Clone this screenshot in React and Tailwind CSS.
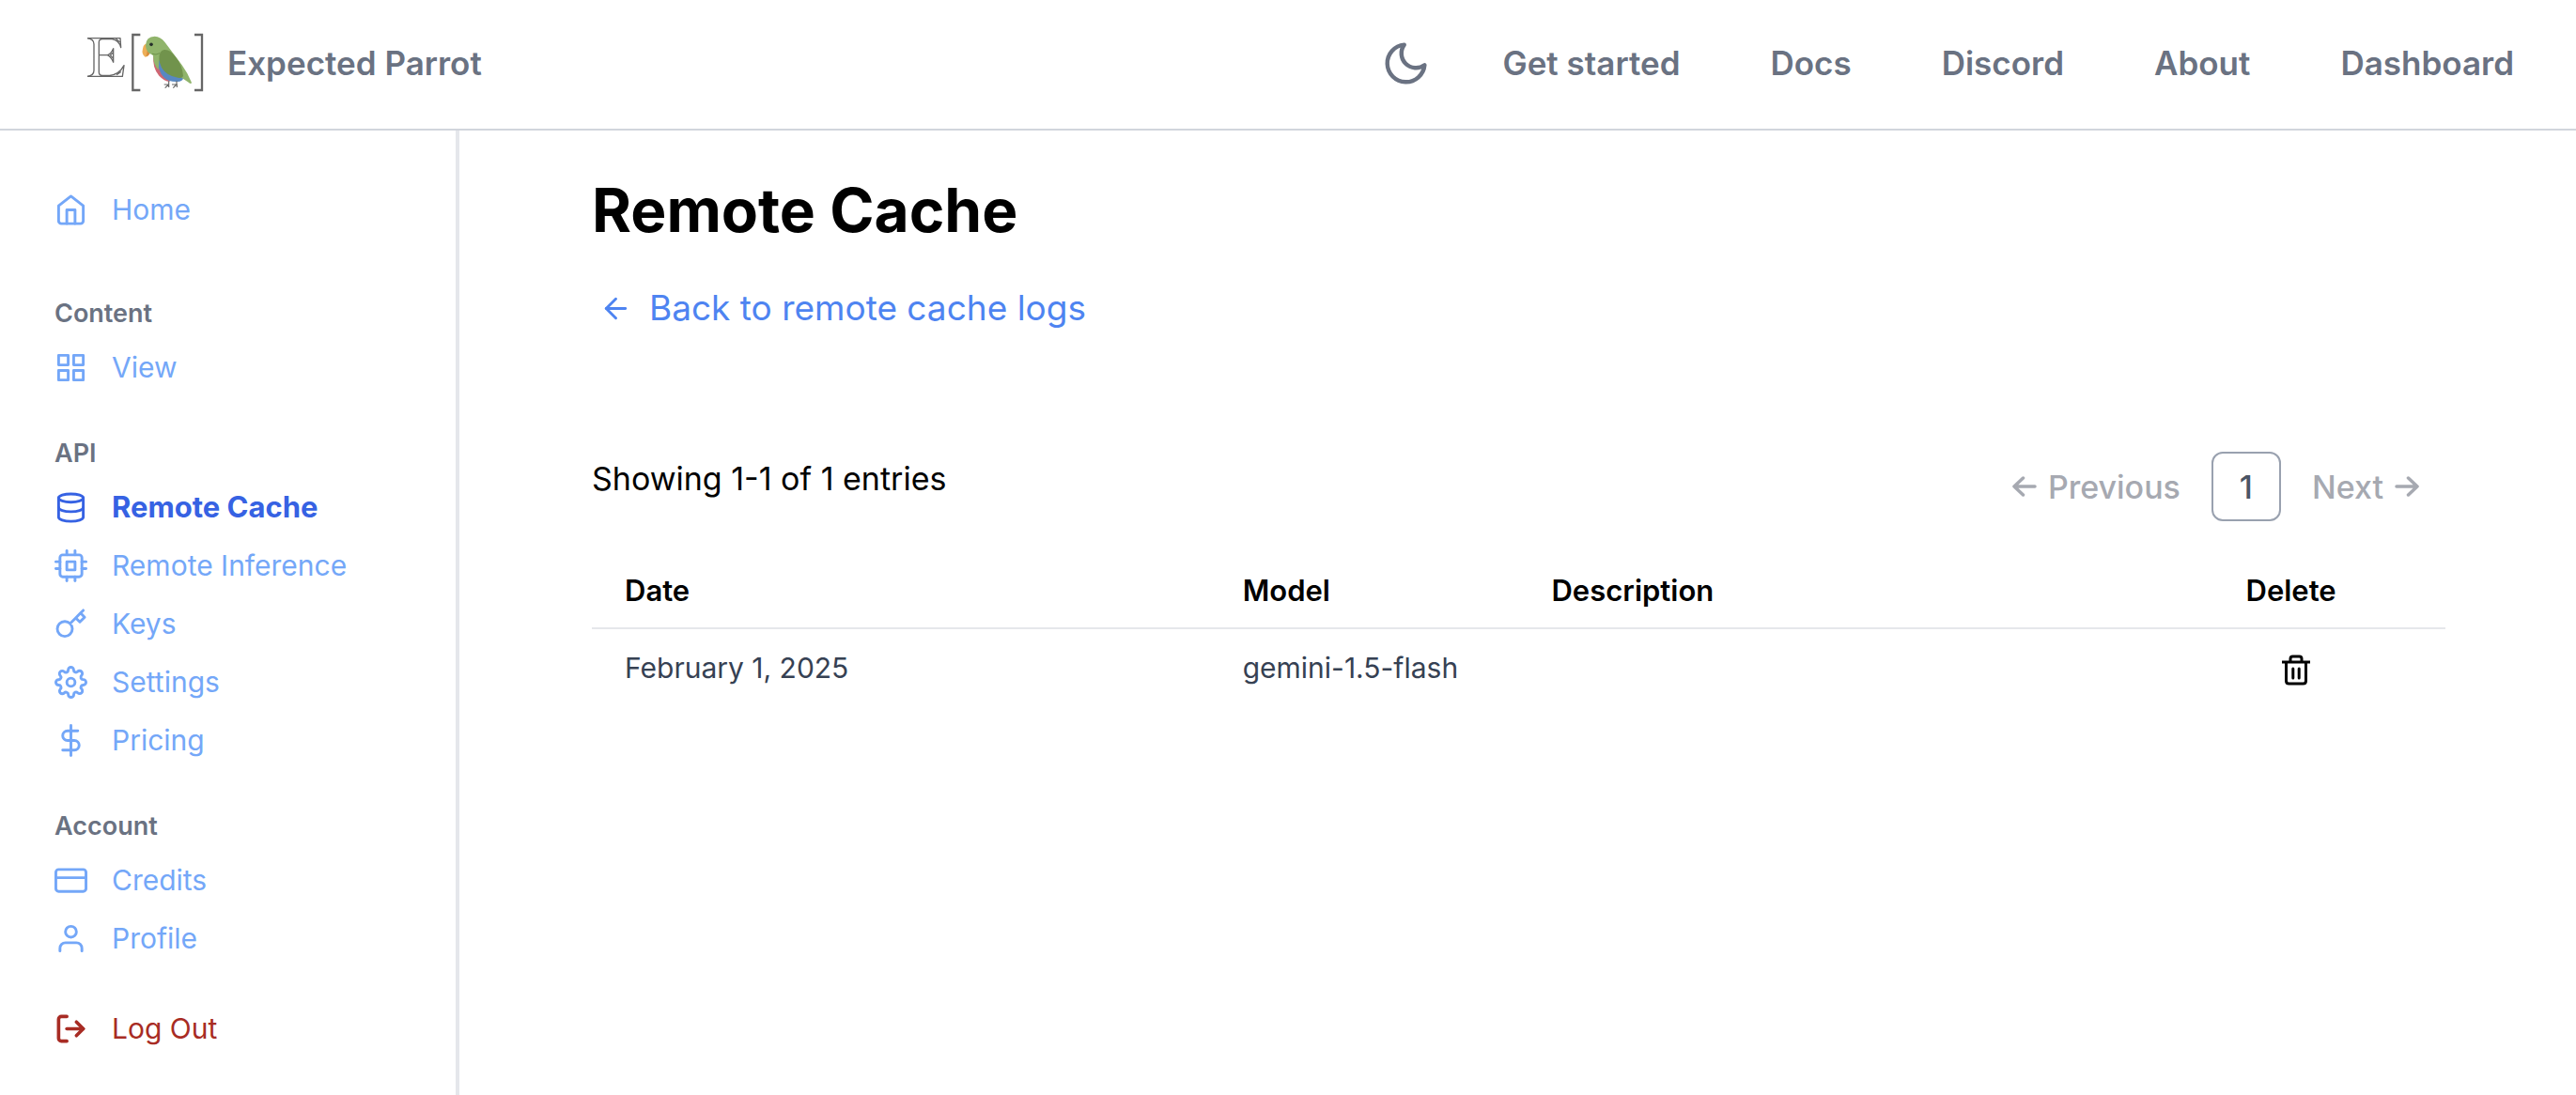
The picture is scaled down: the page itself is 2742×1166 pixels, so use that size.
import { FiHome, FiGrid, FiDatabase, FiCpu, FiKey, FiSettings, FiDollarSign, FiCreditCard, FiUser, FiLogOut, FiArrowLeft, FiMoon } from "react-icons/fi";

const navLinks = ["Get started", "Docs", "Discord", "About", "Dashboard"];

const sections = [
  { title: "Content", items: [{ label: "View", Icon: FiGrid }] },
  {
    title: "API",
    items: [
      { label: "Remote Cache", Icon: FiDatabase, active: true },
      { label: "Remote Inference", Icon: FiCpu },
      { label: "Keys", Icon: FiKey },
      { label: "Settings", Icon: FiSettings },
      { label: "Pricing", Icon: FiDollarSign },
    ],
  },
  {
    title: "Account",
    items: [
      { label: "Credits", Icon: FiCreditCard },
      { label: "Profile", Icon: FiUser },
    ],
  },
];

function Logo() {
  return (
    <svg viewBox="96 75 384 198" className="h-[66px] w-32" role="img" aria-label="Expected Parrot logo">
      {/* open-face initial */}
      <g fill="none" stroke="#666" strokeWidth="4" strokeLinejoin="round">
        <path d="M99 95H204L206 125Q200 102 178 98H147Q136 98 136 108V149H163Q174 146 182 128V172Q174 153 163 149M136 149V203Q136 214 147 214H170Q200 212 216 182L211 217H99" />
        <path d="M99 95Q120 98 120 114V198Q120 214 99 217M190 97L203 108M172 149L182 140M172 149L182 160M192 212L206 202" />
      </g>
      <path d="M268 84H244V261H268M441 84H465V261H441" fill="none" stroke="#666" strokeWidth="7" />
      {/* parrot */}
      <path d="M276 128Q279 113 290 112L300 138Q295 154 284 155Q271 146 276 128Z" fill="#edae57" />
      <path d="M290 135L300 140Q296 152 287 153Z" fill="#d98d3c" />
      <path d="M310 150Q306 190 328 215Q344 232 362 234L350 170Z" fill="#cf6673" />
      <path d="M326 160Q322 200 344 221Q364 238 394 233Q405 230 405 222L370 180Z" fill="#5888c2" />
      <path d="M285 118Q286 90 314 89Q333 90 346 107L401 181Q420 207 432 237Q430 244 420 235L402 223L328 165L326 196Q310 182 309 150Q286 142 285 118Z" fill="#90b46b" />
      <path d="M345 132Q362 130 380 154Q403 182 405 216Q402 224 388 221Q352 216 336 189Q322 160 332 140Q337 133 345 132Z" fill="#71934c" />
      <path d="M306 145Q318 150 330 143" fill="none" stroke="#668b43" strokeWidth="2.500" />
      <circle cx="303" cy="115" r="5.500" fill="#26302b" />
      <path d="M359 232V242L347 254M344 243H359V252M384 232V242L373 254M369 243H385V252" fill="none" stroke="#666" strokeWidth="3.500" />
    </svg>
  );
}

function SideLink({ label, Icon, active }) {
  return (
    <a
      href="#"
      aria-current={active ? "page" : undefined}
      className={
        active
          ? "flex h-[62px] items-center gap-[26px] text-[31px] font-bold text-[#3662e3]"
          : "flex h-[62px] items-center gap-[26px] text-[30px] text-[#74a7f8]"
      }
    >
      <Icon size={35} />
      {label}
    </a>
  );
}

function TrashIcon() {
  return (
    <svg viewBox="0 0 32 34" className="h-[34px] w-8" fill="none" stroke="currentColor" strokeWidth="3" aria-hidden="true">
      <path d="M1 9H31M5.500 9V29Q5.500 32 8.500 32H23.500Q26.500 32 26.500 29V9M10 9V5.500Q10 3 12.500 3H19.500Q22 3 22 5.500V9" />
      <path d="M12.800 16V26M19.200 16V26" strokeLinecap="round" />
    </svg>
  );
}

function PageArrow({ flip }) {
  return (
    <svg viewBox="0 0 26 22" className={flip ? "h-[22px] w-[26px] rotate-180" : "h-[22px] w-[26px]"} fill="none" stroke="currentColor" strokeWidth="3.5" strokeLinecap="round" strokeLinejoin="round" aria-hidden="true">
      <path d="M11.500 2L2 11L11.500 20M2 11H24" />
    </svg>
  );
}

export default function App() {
  return (
    <div className="flex min-h-screen flex-col bg-white font-['Inter',sans-serif] text-black">
      <header className="flex h-[139px] items-center justify-between border-b-2 border-gray-300 pr-[66px] pb-[3px] pl-[92px] text-gray-500">
        <a href="#" className="flex items-center gap-[22px] text-[35px] font-semibold">
          <Logo />
          Expected Parrot
        </a>
        <nav className="flex items-center gap-24 text-[35px] font-semibold">
          <button type="button" aria-label="Toggle dark mode" className="-mr-5">
            <FiMoon size={53} />
          </button>
          {navLinks.map((l) => (
            <a key={l} href="#">{l}</a>
          ))}
        </nav>
      </header>
      <div className="flex flex-1">
        <aside className="w-[489px] shrink-0 border-r-4 border-gray-200 pt-[53px] pl-[58px]">
          <SideLink label="Home" Icon={FiHome} />
          {sections.map((s) => (
            <section key={s.title} className="pt-[41px] first-of-type:pt-[60px]">
              <h2 className="mb-1.5 flex h-10 items-center text-[27px] font-semibold text-gray-500">{s.title}</h2>
              {s.items.map((i) => (
                <SideLink key={i.label} {...i} />
              ))}
            </section>
          ))}
          <a href="#" className="mt-[34px] flex h-[62px] items-center gap-[26px] text-[30px] text-[#a82c24]">
            <FiLogOut size={35} strokeWidth={2.5} />
            Log Out
          </a>
        </aside>
        <main className="flex-1 pt-[45px] pr-[139px] pl-[141px]">
          <h1 className="text-[64px] leading-[80px] font-bold">Remote Cache</h1>
          <a href="#" className="mt-10 flex h-12 items-center gap-[18px] pl-2 text-[37px] text-[#4e84f1]">
            <FiArrowLeft size={35} />
            Back to remote cache logs
          </a>
          <div className="mt-[129px] flex items-start justify-between pr-7">
            <p className="text-[34px] leading-[58px]">Showing 1-1 of 1 entries</p>
            <nav aria-label="Pagination" className="flex items-center text-[34px] font-medium text-[#a6a9b1]">
              <button type="button" disabled className="flex items-center gap-3"><PageArrow />Previous</button>
              <button type="button" aria-current="page" className="mx-[33px] size-[74px] rounded-xl border-2 border-gray-400 text-gray-600">1</button>
              <button type="button" disabled className="flex items-center gap-3">Next<PageArrow flip /></button>
            </nav>
          </div>
          <table className="mt-[31px] w-full table-fixed text-left">
            <thead>
              <tr className="h-[83px] border-b-2 border-gray-200 text-[31px]">
                <th className="w-1/3 px-[35px] pt-1 font-semibold">Date</th>
                <th className="w-1/6 px-[35px] pt-1 font-semibold">Model</th>
                <th className="w-1/3 px-[35px] pt-1 font-semibold">Description</th>
                <th className="w-1/6 pt-1 text-center font-semibold">Delete</th>
              </tr>
            </thead>
            <tbody>
              <tr className="h-[83px] text-[30px] text-gray-700">
                <td className="px-[35px]">February 1, 2025</td>
                <td className="px-[35px] whitespace-nowrap">gemini-1.5-flash</td>
                <td></td>
                <td className="pl-[10px] text-center text-black">
                  <button type="button" aria-label="Delete entry" className="align-middle"><TrashIcon /></button>
                </td>
              </tr>
            </tbody>
          </table>
        </main>
      </div>
    </div>
  );
}
